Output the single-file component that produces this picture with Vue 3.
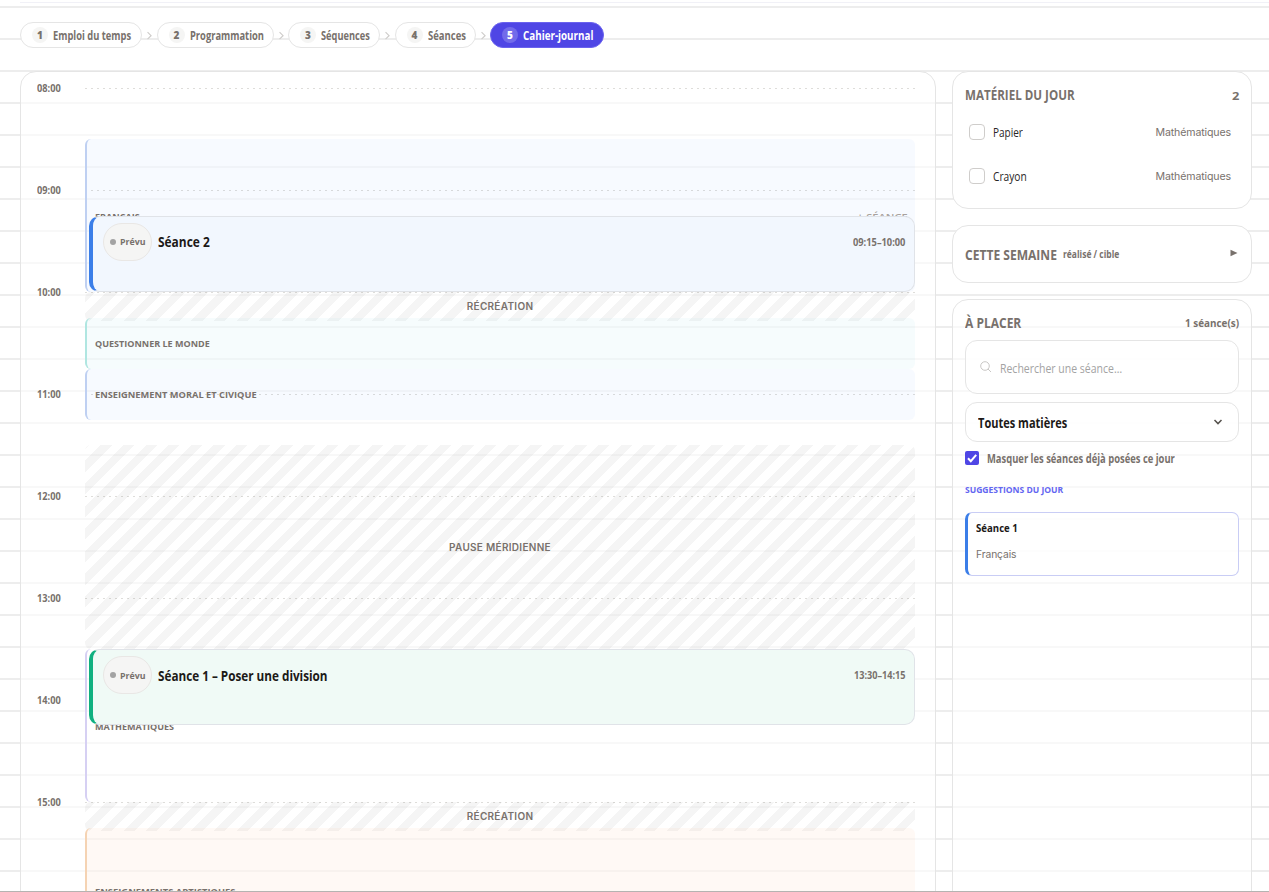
<script setup>
const steps = [
  { n: 1, label: 'Emploi du temps', w: 122, tw: 78 },
  { n: 2, label: 'Programmation', w: 117, tw: 74 },
  { n: 3, label: 'Séquences', w: 92, tw: 49 },
  { n: 4, label: 'Séances', w: 81, tw: 38 },
  { n: 5, label: 'Cahier-journal', w: 114, tw: 70 },
]
const hours = ['08:00', '09:00', '10:00', '11:00', '12:00', '13:00', '14:00', '15:00']
const PX = 1.7
const at = (h, m) => ((h - 8) * 60 + m) * PX + 16
const slots = [
  { label: 'FRANÇAIS', kind: 'blue low', s: at(8, 30), e: at(10, 0), tw: 45, add: true },
  { label: 'RÉCRÉATION', kind: 'pause', s: at(10, 0), e: at(10, 15) + 3 },
  { label: 'QUESTIONNER LE MONDE', kind: 'teal', s: at(10, 15), e: at(10, 45), tw: 115 },
  { label: 'ENSEIGNEMENT MORAL ET CIVIQUE', kind: 'blue', s: at(10, 45), e: at(11, 15), tw: 162 },
  { label: 'PAUSE MÉRIDIENNE', kind: 'pause', s: at(11, 30), e: at(13, 30) },
  { label: 'MATHÉMATIQUES', kind: 'violet low', s: at(13, 30), e: at(15, 0), tw: 79 },
  { label: 'RÉCRÉATION', kind: 'pause', s: at(15, 0), e: at(15, 15) + 3 },
  { label: 'ENSEIGNEMENTS ARTISTIQUES', kind: 'orange', s: at(15, 15), e: at(16, 30), tw: 141 },
]
const lessons = [
  { title: 'Séance 2', time: '09:15–10:00', kind: 'l-blue', s: at(9, 15), tw: 52, hw: 52 },
  { title: 'Séance 1 – Poser une division', time: '13:30–14:15', kind: 'l-green', s: at(13, 30), tw: 170, hw: 51 },
]
const box = (o) => ({ top: o.s + 'px', height: o.e - o.s + 'px' })

// Condenses an element's glyphs horizontally so that it fills the given width.
const vFit = {
  mounted(el, { value }) {
    const inner = el.firstElementChild
    el.style.width = value + 'px'
    inner.style.transform = `scaleX(${value / inner.offsetWidth})`
  },
}
</script>

<template>
  <div class="page">
    <div class="topline"></div>
    <nav class="steps">
      <template v-for="(s, i) in steps" :key="s.n">
        <svg v-if="i" class="sep" viewBox="0 0 14 14"><path d="M5.300 4.200l3.500 3.500L5.300 11.200" /></svg>
        <div class="step" :class="{ on: s.n === 5 }" :style="{ width: s.w + 'px' }">
          <b class="num">{{ s.n }}</b>
          <span v-fit="s.tw" class="fit"><span>{{ s.label }}</span></span>
        </div>
      </template>
    </nav>

    <main class="cols">
      <section class="day">
        <div v-for="(h, i) in hours" :key="h" class="hour" :style="{ top: at(8 + i, 0) - 8 + 'px' }">
          <span v-fit="24" class="fit"><span>{{ h }}</span></span><i></i>
        </div>
        <div v-for="(b, i) in slots" :key="i" class="slot" :class="b.kind" :style="box(b)">
          <span v-if="b.kind === 'pause'">{{ b.label }}</span>
          <span v-else v-fit="b.tw" class="fit"><span>{{ b.label }}</span></span>
          <span v-if="b.add" v-fit="50" class="fit add"><span>+ SÉANCE</span></span>
        </div>
        <article v-for="l in lessons" :key="l.title" class="lesson" :class="l.kind" :style="{ top: l.s + 'px' }">
          <div class="badge"><i></i><span v-fit="26" class="fit"><span>Prévu</span></span></div>
          <h3 v-fit="l.tw" class="fit"><span>{{ l.title }}</span></h3>
          <time v-fit="l.hw" class="fit"><span>{{ l.time }}</span></time>
        </article>
      </section>

      <aside class="side">
        <section class="card mat">
          <header><h2 v-fit="110" class="fit"><span>MATÉRIEL DU JOUR</span></h2><b v-fit="7" class="fit cnt"><span>2</span></b></header>
          <label class="item"><i></i><span v-fit="30" class="fit"><span>Papier</span></span><small>Mathématiques</small></label>
          <label class="item"><i></i><span v-fit="34" class="fit"><span>Crayon</span></span><small>Mathématiques</small></label>
        </section>

        <section class="card week">
          <h2 v-fit="92" class="fit"><span>CETTE SEMAINE</span></h2>
          <b v-fit="56" class="fit"><span>réalisé / cible</span></b>
          <svg viewBox="0 0 8 8"><path d="M.5 .8L7.500 4 .5 7.200z" /></svg>
        </section>

        <section class="card place">
          <header><h2 v-fit="56" class="fit"><span>À PLACER</span></h2><b v-fit="54" class="fit"><span>1 séance(s)</span></b></header>
          <div class="search">
            <svg viewBox="0 0 12 12"><circle cx="5" cy="5" r="4.300" /><path d="M8 8l3 3" /></svg>
            <span v-fit="122" class="fit"><span>Rechercher une séance…</span></span>
          </div>
          <div class="select">
            <span v-fit="89" class="fit"><span>Toutes matières</span></span>
            <svg viewBox="0 0 10 10"><path d="M1.500 3L5 6.600 8.500 3" /></svg>
          </div>
          <label class="hide">
            <svg viewBox="0 0 14 14"><rect width="14" height="14" rx="2" /><path d="M3 7.300l2.800 2.900L11.200 3.800" /></svg>
            <span v-fit="188" class="fit"><span>Masquer les séances déjà posées ce jour</span></span>
          </label>
          <h4 v-fit="98" class="fit"><span>SUGGESTIONS DU JOUR</span></h4>
          <div class="sugg">
            <b v-fit="42" class="fit"><span>Séance 1</span></b>
            <small>Français</small>
          </div>
        </section>
      </aside>
    </main>
  </div>
</template>

<style>
html, body { margin: 0; overflow: hidden; }
</style>

<style scoped>
* { box-sizing: border-box; margin: 0; }
.page {
  position: relative; width: 1269px; height: 892px; overflow: hidden;
  font-family: "Open Sans", "Noto Sans", sans-serif; color: #78716c;
  background: repeating-linear-gradient(#fff 0 6px, #ededed 6px 8px, #fff 8px 32px);
  border-bottom: 1px solid #b5b3b1;
}
.topline { height: 1px; margin: 2px 0 0 20px; background: #f1f1f7; }
.fit { display: inline-flex; flex: none; white-space: nowrap; }
.fit > span { flex: none; transform-origin: 0 50%; }
.steps { display: flex; align-items: center; margin: 19px 0 0 20px; height: 26px; }
.step {
  display: flex; align-items: center; gap: 5px; height: 26px; padding-left: 11px; flex: none;
  border: 1px solid #e5e5e5; border-radius: 13px; background: #fff;
  font-size: 11.5px; font-weight: 700;
}
.step .fit { margin-top: 1px; }
.num {
  width: 16px; height: 16px; border-radius: 50%; background: #f5f5f4; flex: none;
  font-size: 10px; line-height: 16px; text-align: center;
}
.step.on { background: #4f46e5; border-color: #6a62ee; color: #fff; }
.on .num { background: #726bea; }
.sep { width: 14.500px; height: 14px; flex: none; fill: none; stroke: #cfcdcb; stroke-width: 1.200; }
.cols { display: flex; gap: 16px; margin: 23px 0 0 20px; }
.day {
  position: relative; width: 916px; height: 860px; flex: none;
  border: 1px solid #e5e5e5; border-radius: 16px 16px 0 0; background: rgba(255, 255, 255, .62);
}
.hour { position: absolute; left: 16px; width: 882px; height: 16px; display: flex; align-items: center; font-size: 10px; font-weight: 700; }
.hour i { margin-left: 24px; flex: 1; height: 1px; background: repeating-linear-gradient(90deg, #deddda 0 2px, transparent 2px 6px); }
.slot {
  position: absolute; left: 64px; width: 830px; display: flex; align-items: center;
  padding-left: 8px; border-left: 2px solid; border-radius: 6px; font-size: 9.500px; font-weight: 700;
}
.low .fit { margin-top: 1px; }
.add { position: absolute; right: 8px; font-weight: 600; color: #a8a29e; }
.blue { background: rgba(59, 130, 246, .04); border-color: #bfd0f2; }
.teal { background: rgba(20, 184, 216, .04); border-color: #b0e6e1; }
.violet { border-color: #d6d0f3; }
.orange { background: rgba(249, 115, 22, .045); border-color: #f5d3b3; }
.pause {
  justify-content: center; padding: 0; border: 0; font: 600 10px/1 Inter, sans-serif; letter-spacing: .3px;
  background: repeating-linear-gradient(-45deg, transparent 0 8px, rgba(0, 0, 0, .04) 8px 16px);
}
.lesson {
  position: absolute; left: 68px; width: 826px; height: 76px; display: flex; align-items: flex-start;
  padding: 6px 9px 0 10px; border: 1px solid #e0e3e8; border-left: 4px solid; border-radius: 10px;
}
.l-blue { background: #f2f7fe; border-left-color: #3b7ee8; }
.l-green { background: #f0faf6; border-left-color: #10b080; }
.badge {
  display: flex; align-items: center; gap: 4px; width: 49px; height: 38px; padding-left: 6px;
  border: 1px solid #e9e7e5; border-radius: 19px; background: #f5f5f4; font-size: 9.500px; font-weight: 700;
}
.badge i { width: 6px; height: 6px; border-radius: 50%; background: #a3a3a3; }
.lesson h3 { margin: 9px 0 0 6px; font-size: 14px; line-height: 20px; color: #1c1917; }
.l-green h3 { margin-top: 10px; }
.lesson time { margin: 12px 0 0 auto; font-size: 10px; line-height: 14px; font-weight: 700; }
.side { width: 300px; flex: none; display: flex; flex-direction: column; gap: 16px; }
.card { border: 1px solid #e5e5e5; border-radius: 16px; background: #fff; padding: 0 12px; }
.card header { display: flex; justify-content: space-between; align-items: center; }
.card h2 { font-size: 13.500px; line-height: 20px; font-weight: 700; }
.mat { height: 138px; padding-top: 13px; }
.mat header { height: 20px; margin-bottom: 5px; }
.cnt { font-size: 11px; }
.item { display: flex; align-items: center; height: 44px; padding: 0 8px 0 4px; color: #292524; font-size: 12px; }
.item i { width: 16px; height: 16px; margin-right: 8px; border: 1px solid #cfcdcb; border-radius: 4px; }
.item .fit { margin-top: 1px; }
small { font: 400 10.500px/14px Inter, sans-serif; color: #78716c; }
.item small { margin: 1px 0 0 auto; font-size: 10.600px; letter-spacing: -.13px; }
.week { display: flex; align-items: center; height: 58px; }
.week h2 { margin-top: 1px; }
.week b { margin-left: 6px; font-size: 10px; }
.week svg { width: 8px; height: 8px; margin: -2px 1px 0 auto; fill: #78716c; }
.place { height: 640px; padding-top: 13px; background: rgba(255, 255, 255, .62); }
.place header { height: 20px; }
.place header b { margin-top: -1px; font-size: 11px; }
.search, .select { display: flex; align-items: center; border: 1px solid #e5e5e5; border-radius: 12px; background: rgba(255, 255, 255, .8); }
.search { height: 54px; margin-top: 7px; padding: 2px 0 0 14px; font-size: 13.500px; color: #a3a3a3; }
.search svg { width: 12px; height: 12px; margin: -3px 8px 0 0; fill: none; stroke: #c9c7c5; }
.select { height: 40px; margin-top: 8px; padding: 0 15px 0 12px; justify-content: space-between; font-size: 13.500px; font-weight: 700; color: #1c1917; }
.select .fit { margin-top: 2px; }
.select svg { width: 10px; height: 10px; fill: none; stroke: #57534e; stroke-width: 1.500; }
.hide { display: flex; align-items: center; height: 16px; margin-top: 9px; font-size: 11.500px; font-weight: 700; }
.hide svg { width: 14px; height: 14px; margin: -2px 7px 0 0; }
.hide .fit { margin: -2px 0 0 1px; }
.hide rect { fill: #4f46e5; }
.hide path { fill: none; stroke: #fff; stroke-width: 2; }
.place h4 { display: flex; margin-top: 16px; font-size: 9.500px; line-height: 14px; color: #6366f1; }
.sugg {
  display: flex; flex-direction: column; height: 64px; margin-top: 15px; padding: 8px 0 0 8px;
  border: 1px solid #c9cdf5; border-left: 3px solid #3b7ee8; border-radius: 7px; background: rgba(255, 255, 255, .7);
  font-size: 11px; line-height: 14px; color: #1c1917;
}
.sugg small { margin-top: 12px; font-size: 10.300px; letter-spacing: -.1px; }
</style>
